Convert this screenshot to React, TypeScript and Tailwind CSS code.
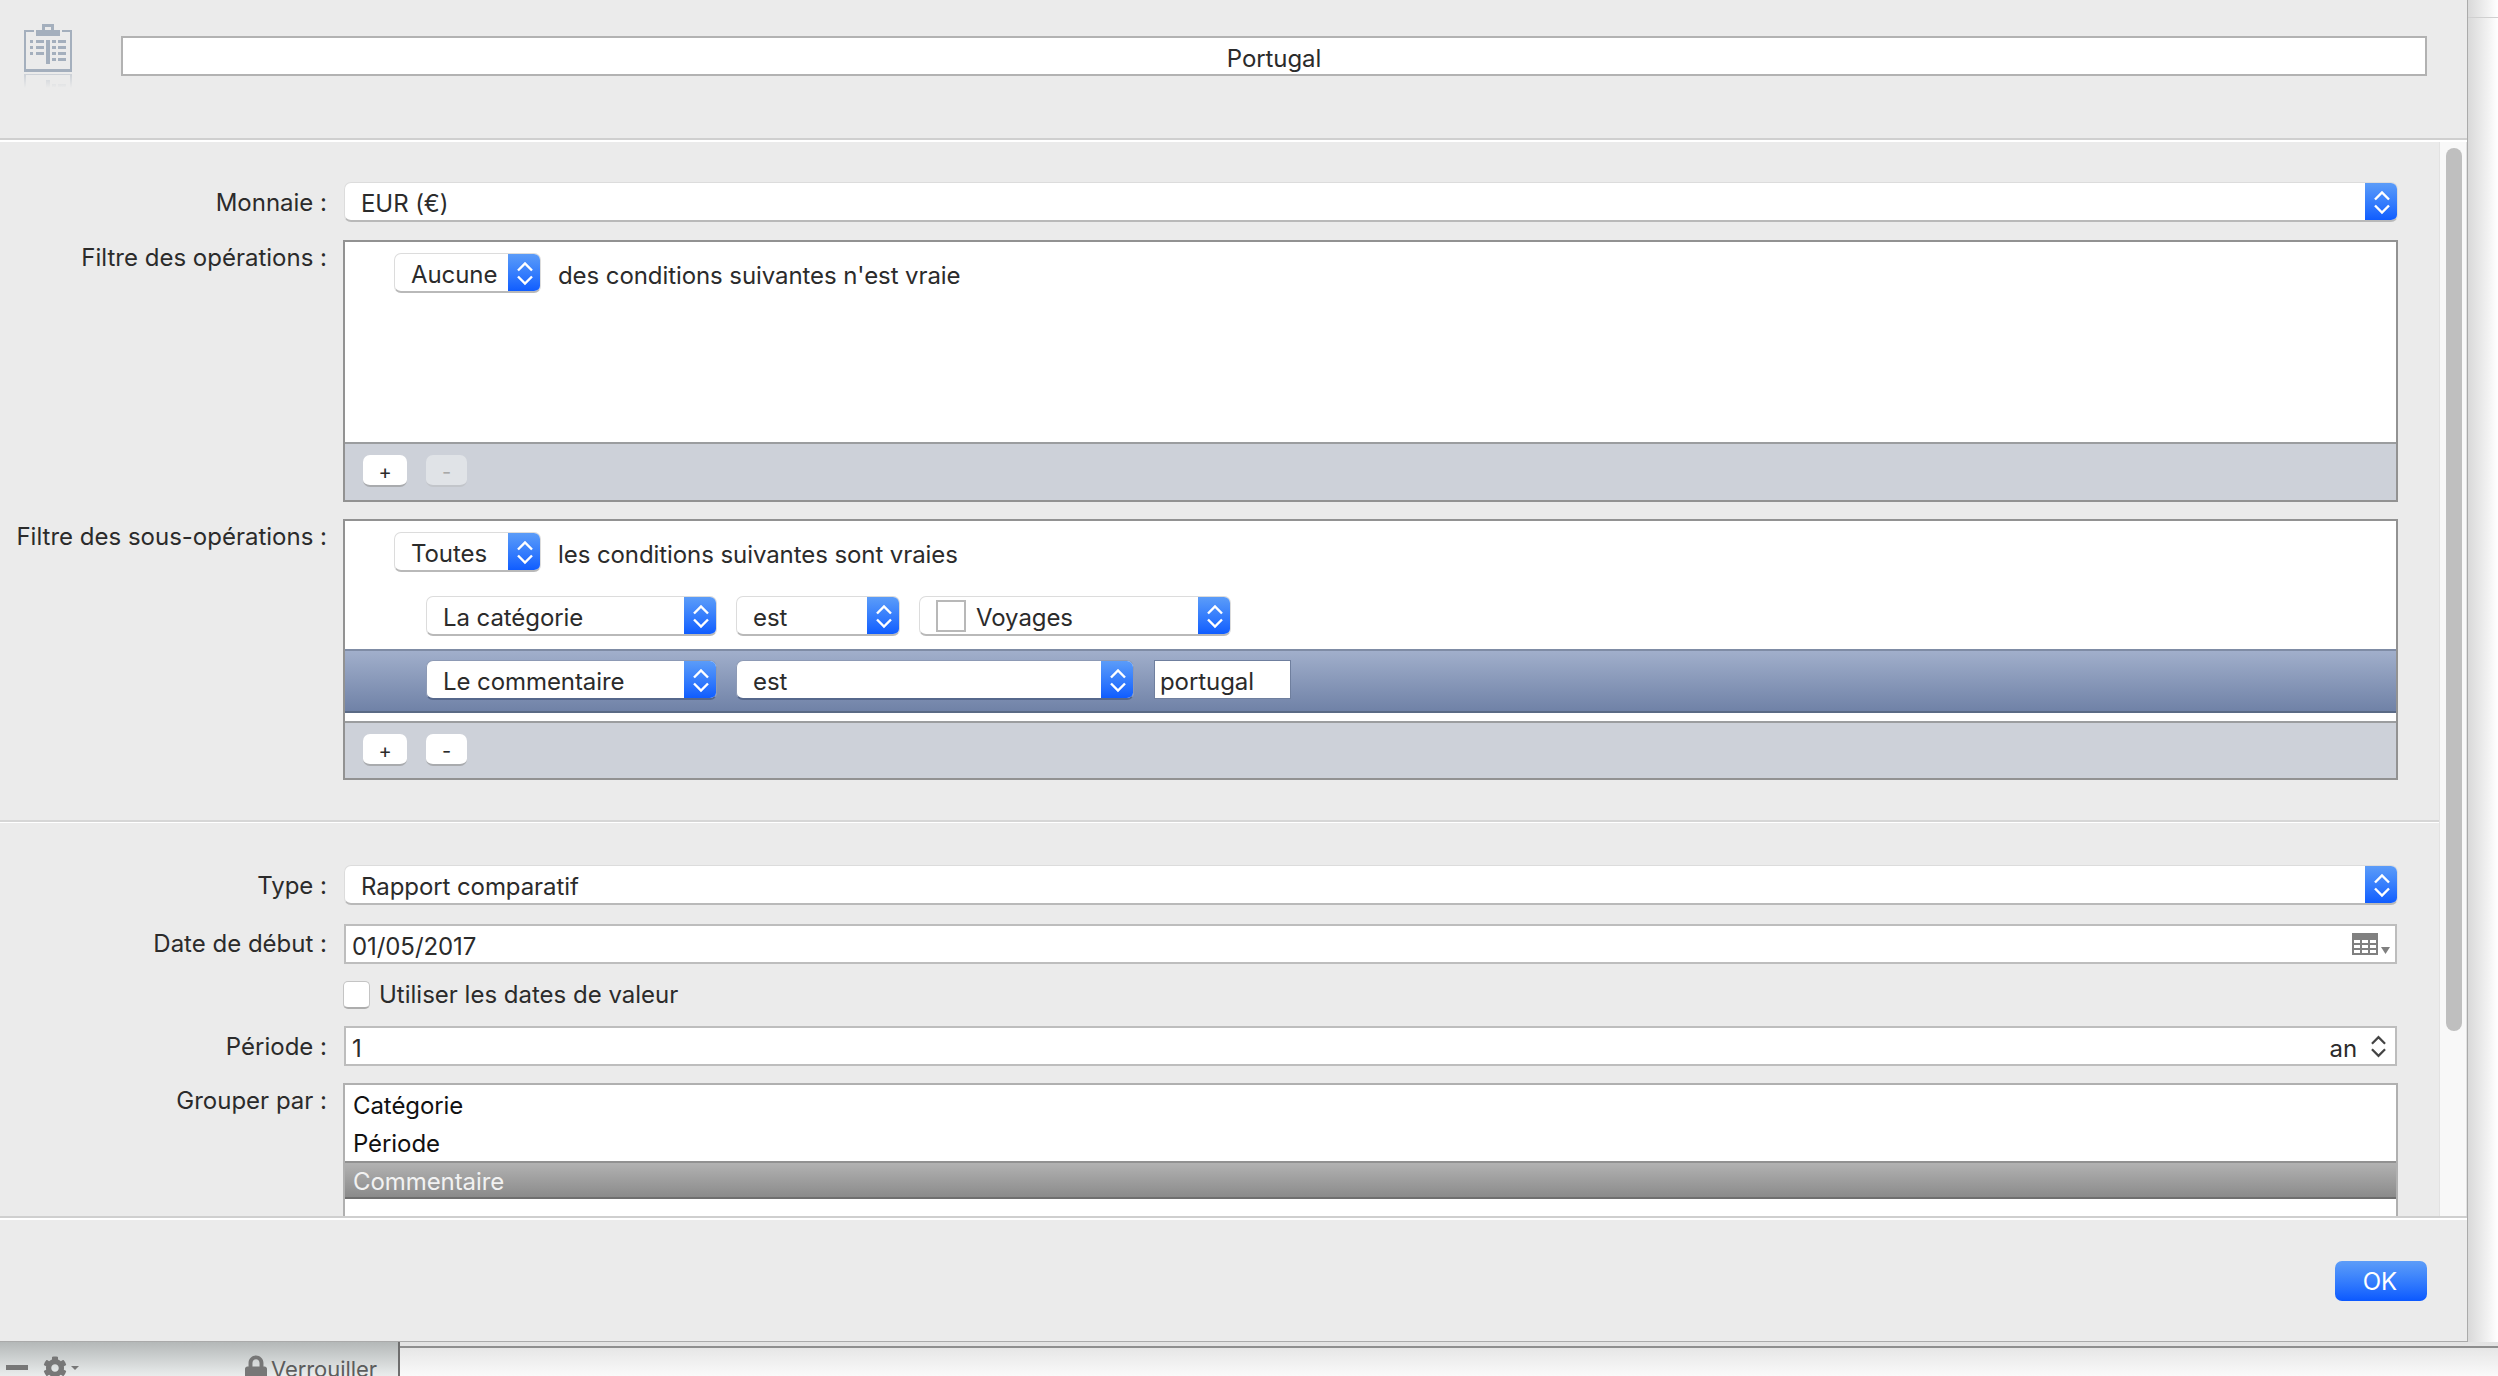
import { ReactNode } from 'react';
import { FaCog, FaLock } from 'react-icons/fa';

function Chevrons({ className }: { className: string }) {
  return (
    <svg viewBox="0 0 16 24" className={className} fill="none" stroke="currentColor" strokeWidth="2.4">
      <path d="M1 9l7-7 7 7" />
      <path d="M1 15l7 7 7-7" />
    </svg>
  );
}

function Select({
  width,
  label,
  children,
  selected,
}: {
  width: string;
  label: string;
  children?: ReactNode;
  selected?: boolean;
}) {
  return (
    <div
      className={`${width} h-[40px] shrink-0 flex rounded-[7px] overflow-hidden bg-white border-t border-x ${
        selected ? 'border-[#8d9ab5] border-b-2 border-b-[#56688c]' : 'border-[#dcdcdc] border-b-2 border-b-[#b9b9b9]'
      }`}
    >
      <div className="flex-1 flex items-center pl-[16px] gap-[10px] min-w-0 text-[#2b2b2b]">
        {children}
        <span className="pt-[4px]">{label}</span>
      </div>
      <div className="w-[33px] -mt-[1px] -mb-[2px] -mr-[1px] flex items-center justify-center bg-gradient-to-b from-[#5d9df8] to-[#0a58ff] text-white">
        <Chevrons className="w-[16px] h-[25px]" />
      </div>
    </div>
  );
}

function Label({ children, top }: { children: string; top: string }) {
  return (
    <div className={`w-[327px] shrink-0 text-right text-[#2b2b2b] leading-[30px] tracking-normal ${top}`}>{children}</div>
  );
}

function SmallButton({ text, width, disabled }: { text: string; width: string; disabled?: boolean }) {
  return (
    <div
      className={`${width} h-[32px] rounded-[7px] flex items-center justify-center text-[20px] pt-[3px] border-b-2 ${
        disabled ? 'bg-[#e0e3e7] text-[#a8a8a8] border-b-[#c2c5ca]' : 'bg-white text-[#2b2b2b] border-b-[#a9abae]'
      }`}
    >
      {text}
    </div>
  );
}

function BoxFooter({ minusDisabled, height }: { minusDisabled?: boolean; height: string }) {
  return (
    <div className={`${height} shrink-0 flex gap-[19px] bg-[#cdd1d9] border-t-2 border-[#9b9d9f] pt-[11px] pl-[18px]`}>
      <SmallButton text="+" width="w-[44px]" />
      <SmallButton text="-" width="w-[41px]" disabled={minusDisabled} />
    </div>
  );
}

function ClipboardIcon() {
  return (
    <svg viewBox="0 0 48 64" className="w-[48px] h-[64px]" fill="#a4afbd">
      <defs>
        <linearGradient id="fade" x1="0" y1="0" x2="0" y2="1">
          <stop offset="0" stopColor="#a4afbd" stopOpacity="0.45" />
          <stop offset="1" stopColor="#a4afbd" stopOpacity="0" />
        </linearGradient>
      </defs>
      <path d="M18 0h12v6h6v6H12V6h6zM21 3v3h6V3z" fillRule="evenodd" />
      <path d="M0 6h10v2H2v37h44V8h-8V6h10v42H0z" />
      <rect x="22" y="16" width="4" height="24" />
      <rect x="6" y="16" width="3" height="3" />
      <rect x="12" y="16" width="8" height="3" />
      <rect x="6" y="22" width="3" height="3" />
      <rect x="12" y="22" width="8" height="3" />
      <rect x="6" y="28" width="3" height="3" />
      <rect x="12" y="28" width="8" height="3" />
      <rect x="28" y="16" width="4" height="3" />
      <rect x="34" y="16" width="8" height="3" />
      <rect x="28" y="22" width="4" height="3" />
      <rect x="34" y="22" width="8" height="3" />
      <rect x="28" y="28" width="4" height="3" />
      <rect x="34" y="28" width="8" height="3" />
      <rect x="28" y="34" width="4" height="3" />
      <rect x="34" y="34" width="8" height="3" />
      <path
        fill="url(#fade)"
        d="M0 50h2v14H0zM46 50h2v14h-2zM2 50h44v1H2zM22 56h4v8h-4zM28 60h4v3h-4zM34 60h8v3h-8z"
      />
    </svg>
  );
}

function CalendarIcon() {
  return (
    <svg viewBox="0 0 38 22" className="w-[38px] h-[22px]" fill="#808080">
      <path
        fillRule="evenodd"
        d="M0 0h26v22H0zM2 7v3h6V7zm8 0v3h6V7zm8 0v3h6V7zM2 12v3h6v-3zm8 0v3h6v-3zm8 0v3h6v-3zM2 17v3h6v-3zm8 0v3h6v-3zm8 0v3h6v-3z"
      />
      <path d="M29 14h9l-4.500 7z" />
    </svg>
  );
}

export default function App() {
  return (
    <div className="w-[2498px] h-[1376px] overflow-hidden bg-white flex flex-col text-[24px] tracking-[-0.08px] font-['Inter',sans-serif]">
      <div className="h-[1342px] flex shrink-0">
        {/* Dialog */}
        <div className="w-[2468px] flex flex-col bg-[#ebebeb] border-r border-b border-[#aaaaaa]">
          <div className="h-[138px] shrink-0 flex pt-[24px] pl-[24px]">
            <ClipboardIcon />
            <div className="ml-[49px] w-[2306px] h-[40px] mt-[12px] bg-white border-2 border-[#b2b2b2] flex items-center justify-center text-[#2b2b2b] pt-[5px]">
              Portugal
            </div>
          </div>
          <div className="h-[4px] shrink-0 border-t-2 border-[#cfcfcf] bg-white" />

          <div className="h-[1074px] shrink-0 flex overflow-hidden">
            <div className="w-[2439px] shrink-0 pt-[40px]">
              <div className="flex gap-[17px]">
                <Label top="mt-[6px]">Monnaie :</Label>
                <Select width="w-[2054px]" label="EUR (€)" />
              </div>

              <div className="flex gap-[16px] mt-[18px]">
                <Label top="mt-[3px]">Filtre des opérations :</Label>
                <div className="w-[2055px] h-[262px] border-2 border-[#929292] bg-white flex flex-col">
                  <div className="h-[200px] shrink-0 pt-[11px] pl-[49px] flex gap-[17px]">
                    <Select width="w-[147px]" label="Aucune" />
                    <span className="h-[40px] text-[#2b2b2b] leading-[46px]">des conditions suivantes n'est vraie</span>
                  </div>
                  <BoxFooter minusDisabled height="h-[58px]" />
                </div>
              </div>

              <div className="flex gap-[16px] mt-[17px]">
                <Label top="mt-[3px]">Filtre des sous-opérations :</Label>
                <div className="w-[2055px] h-[261px] border-2 border-[#929292] bg-white flex flex-col">
                  <div className="h-[200px] shrink-0 pt-[11px]">
                    <div className="pl-[49px] flex gap-[17px]">
                      <Select width="w-[147px]" label="Toutes" />
                      <span className="h-[40px] text-[#2b2b2b] leading-[46px]">les conditions suivantes sont vraies</span>
                    </div>
                    <div className="pl-[81px] mt-[24px] flex gap-[19px]">
                      <Select width="w-[291px]" label="La catégorie" />
                      <Select width="w-[164px]" label="est" />
                      <Select width="w-[312px]" label="Voyages">
                        <span className="w-[30px] h-[32px] border-2 border-[#b8b8b8] bg-white" />
                      </Select>
                    </div>
                    <div className="h-[64px] mt-[13px] pt-[9px] pl-[81px] flex gap-[19px] border-y-2 border-t-[#7f8ca5] border-b-[#5a6a85] bg-gradient-to-b from-[#a1afcb] to-[#7082a7]">
                      <Select width="w-[291px]" label="Le commentaire" selected />
                      <Select width="w-[398px]" label="est" selected />
                      <div className="w-[137px] h-[39px] ml-[1px] bg-white border border-[#6f7f9e] pl-[5px] pt-[3px] text-[#2b2b2b]">
                        portugal
                      </div>
                    </div>
                  </div>
                  <BoxFooter height="h-[57px]" />
                </div>
              </div>

              <div className="mt-[40px] w-[2439px] border-t-2 border-b border-t-[#d6d6d6] border-b-white" />

              <div className="flex gap-[17px] mt-[42px]">
                <Label top="mt-[6px]">Type :</Label>
                <Select width="w-[2054px]" label="Rapport comparatif" />
              </div>

              <div className="flex gap-[17px] mt-[19px]">
                <Label top="mt-[5px]">Date de début :</Label>
                <div className="w-[2053px] h-[40px] bg-white border-2 border-[#bdbdbd] flex items-center justify-between pl-[6px] pr-[5px] text-[#2b2b2b]">
                  <span className="pt-[5px]">01/05/2017</span>
                  <CalendarIcon />
                </div>
              </div>

              <div className="flex gap-[9px] h-[28px] mt-[17px] ml-[343px] items-center">
                <span className="w-[27px] h-[28px] bg-white rounded-[5px] border border-[#c4c4c4] border-b-2 border-b-[#adadad]" />
                <span className="text-[#2b2b2b] tracking-normal">Utiliser les dates de valeur</span>
              </div>

              <div className="flex gap-[17px] mt-[17px]">
                <Label top="mt-[6px]">Période :</Label>
                <div className="w-[2053px] h-[40px] bg-white border-2 border-[#bdbdbd] flex items-center justify-between pl-[6px] pr-[9px] text-[#2b2b2b]">
                  <span className="pt-[5px]">1</span>
                  <div className="flex items-center gap-[14px]">
                    <span className="pt-[5px]">an</span>
                    <Chevrons className="w-[15px] h-[25px] text-[#444444]" />
                  </div>
                </div>
              </div>

              <div className="flex gap-[16px] mt-[17px]">
                <Label top="mt-[3px]">Grouper par :</Label>
                <div className="w-[2055px] h-[200px] border-2 border-[#b0b0b0] bg-white text-[#111111]">
                  <div className="h-[38px] pl-[8px] flex items-center pt-[3px]">Catégorie</div>
                  <div className="h-[38px] pl-[8px] flex items-center pt-[3px]">Période</div>
                  <div className="h-[38px] pl-[8px] flex items-center pt-[3px] text-[#f2f2f2] border-y-2 border-t-[#919191] border-b-[#6f6f6f] bg-gradient-to-b from-[#b2b2b2] to-[#8b8b8b]">
                    Commentaire
                  </div>
                </div>
              </div>
            </div>

            {/* Scrollbar */}
            <div className="w-[28px] shrink-0 bg-[#f8f8f8] border-x border-[#e2e2e2] pl-[6px] pt-[6px]">
              <div className="w-[16px] h-[883px] rounded-full bg-[#bfbfbf]" />
            </div>
          </div>

          <div className="flex-1 flex justify-end pr-[40px] pt-[43px] border-t-2 border-[#cfcfcf] shadow-[inset_0_2px_0_#ffffff]">
            <div className="w-[92px] h-[40px] rounded-[7px] flex items-center justify-center pt-[2px] pr-[2px] text-white bg-gradient-to-b from-[#5d9df8] to-[#0a58ff]">
              OK
            </div>
          </div>
        </div>

        <div className="flex-1 bg-gradient-to-r from-[#d9d9d9] to-white pt-[17px]">
          <div className="border-t border-[#d0d0d0]" />
        </div>
      </div>

      {/* Window behind the dialog */}
      <div className="h-[34px] shrink-0 flex overflow-hidden">
        <div className="w-[400px] shrink-0 flex text-[#5c5c5c] border-r-2 border-r-[#6e6e6e] bg-gradient-to-b from-[#b4b8b8] to-[#eaeded]">
          <div className="w-[22px] h-[5px] ml-[6px] mt-[23px] bg-[#777777]" />
          <FaCog className="w-[24px] h-[24px] ml-[15px] mt-[14px] text-[#777777]" />
          <div className="w-0 h-0 ml-[4px] mt-[24px] border-x-[4px] border-t-[4px] border-x-transparent border-t-[#777777]" />
          <FaLock className="w-[22px] h-[26px] ml-[166px] mt-[13px] text-[#777777]" />
          <span className="ml-[4px] mt-[12px] leading-[30px] text-[22px]">Verrouiller</span>
        </div>
        <div className="flex-1 pt-[4px] bg-gradient-to-b from-[#e2e2e2] to-[#fafafa]">
          <div className="border-t-2 border-[#8e8e8e]" />
        </div>
      </div>
    </div>
  );
}
